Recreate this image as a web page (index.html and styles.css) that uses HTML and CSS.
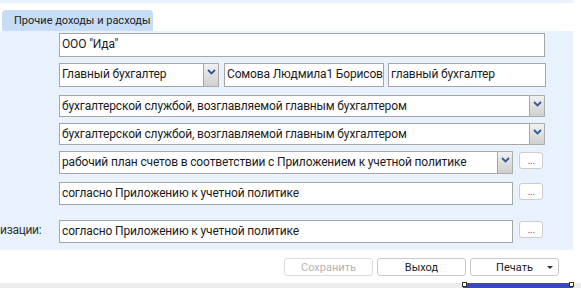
FILE: index.html
```html
<!DOCTYPE html>
<html lang="ru">
<head>
  <meta charset="UTF-8">
  <title>Прочие доходы и расходы</title>
  <link rel="stylesheet" href="styles.css">
</head>
<body>
  <div class="frame">
    <div class="tabbar">
      <div class="tab">Прочие доходы и расходы</div>
    </div>

    <div class="panel">
      <div class="row r1">
        <div class="label"></div>
        <div class="field w-full">ООО "Ида"</div>
      </div>

      <div class="row r2">
        <div class="label"></div>
        <div class="field w-post">Главный бухгалтер</div>
        <div class="drop"><svg viewBox="0 0 9 6" width="9" height="6"><path d="M1 1 L4.5 4.5 L8 1" fill="none" stroke="#2e5b97" stroke-width="1.8"/></svg></div>
        <div class="field w-name">Сомова Людмила1 Борисовна</div>
        <div class="field w-role">главный бухгалтер</div>
      </div>

      <div class="row r3">
        <div class="label"></div>
        <div class="field w-long">бухгалтерской службой, возглавляемой главным бухгалтером</div>
        <div class="drop"><svg viewBox="0 0 9 6" width="9" height="6"><path d="M1 1 L4.5 4.5 L8 1" fill="none" stroke="#2e5b97" stroke-width="1.8"/></svg></div>
      </div>

      <div class="row r4">
        <div class="label"></div>
        <div class="field w-long">бухгалтерской службой, возглавляемой главным бухгалтером</div>
        <div class="drop"><svg viewBox="0 0 9 6" width="9" height="6"><path d="M1 1 L4.5 4.5 L8 1" fill="none" stroke="#2e5b97" stroke-width="1.8"/></svg></div>
      </div>

      <div class="row r5">
        <div class="label"></div>
        <div class="field w-plan">рабочий план счетов в соответствии с Приложением к учетной политике</div>
        <div class="drop"><svg viewBox="0 0 9 6" width="9" height="6"><path d="M1 1 L4.5 4.5 L8 1" fill="none" stroke="#2e5b97" stroke-width="1.8"/></svg></div>
        <button class="more">...</button>
      </div>

      <div class="row r6">
        <div class="label"></div>
        <div class="field w-text">согласно Приложению к учетной политике</div>
        <button class="more">...</button>
      </div>

      <div class="row r7">
        <div class="label">изации:</div>
        <div class="field w-text">согласно Приложению к учетной политике</div>
        <button class="more">...</button>
      </div>
    </div>
  </div>

  <div class="footer">
    <button class="btn" disabled>Сохранить</button>
    <button class="btn">Выход</button>
    <button class="btn btn-menu">Печать <span class="caret"></span></button>
  </div>

  <div class="statusbar">
    <div class="selection"><span class="handle left"></span><span class="handle right"></span></div>
  </div>
</body>
</html>
```

FILE: styles.css
```css
html, body {
  margin: 0;
  padding: 0;
}
body {
  width: 581px;
  height: 288px;
  overflow: hidden;
  background: #fff;
  font-family: Roboto, "Liberation Sans", sans-serif;
  color: #1c1c1c;
}
.frame {
  width: 573px;
  padding-top: 3px;
  background: #e8f1fc;
}
.tabbar {
  height: 28px;
  background: #fff;
  display: flex;
  align-items: flex-end;
}
.tab {
  margin-left: 2px;
  width: 151px;
  height: 21px;
  line-height: 21px;
  box-sizing: border-box;
  padding-left: 12px;
  background: #c7ddf6;
  border-radius: 4px 4px 0 0;
  font-size: 11px;
  white-space: nowrap;
  color: #222;
}
.panel {
  height: 219px;
  padding-top: 2px;
  box-sizing: border-box;
}
.row {
  display: flex;
  align-items: flex-start;
  height: 23px;
  margin-top: 6px;
}
.r1 { margin-top: 0; height: 24px; }
.r2 { height: 24px; }
.r3 { margin-top: 8px; height: 22px; }
.r4 { height: 22px; }
.r6 { margin-top: 8px; }
.r7 { margin-top: 15px; }
.label {
  width: 59px;
  flex: none;
  font-size: 12px;
  letter-spacing: -0.3px;
  line-height: 21px;
  color: #333;
  white-space: nowrap;
  overflow: hidden;
}
.field {
  flex: none;
  height: 100%;
  box-sizing: border-box;
  border: 1px solid #a6a6a6;
  background: #fff;
  padding: 0 2px;
  font-size: 12px;
  letter-spacing: -0.15px;
  line-height: 21px;
  white-space: nowrap;
  overflow: hidden;
}
.r3 .field, .r4 .field { line-height: 20px; }
.w-full { width: 486px; }
.w-post { width: 145px; }
.w-name { width: 160px; margin-left: 5px; }
.w-role { width: 158px; margin-left: 4px; }
.w-long { width: 471px; }
.w-plan { width: 439px; }
.w-text { width: 454px; }
.drop {
  flex: none;
  width: 15px;
  height: 100%;
  box-sizing: border-box;
  border: 1px solid #acacac;
  border-left: none;
  background: linear-gradient(#f1f1f1, #cfcfcf);
  display: flex;
  justify-content: center;
  padding-top: 5px;
}
.more {
  flex: none;
  margin-left: 6px;
  margin-top: 1px;
  width: 24px;
  height: 17px;
  padding: 0;
  border: 1px solid #cdcdcd;
  border-radius: 3px;
  background: #fff;
  color: #6a3f78;
  font-family: "DejaVu Sans", sans-serif;
  font-size: 9px;
  line-height: 14px;
  letter-spacing: -0.5px;
}
.footer {
  height: 33px;
  display: flex;
  justify-content: flex-end;
  align-items: flex-start;
  gap: 4px;
  padding-right: 22px;
  padding-top: 8px;
  box-sizing: border-box;
}
.btn {
  width: 89px;
  height: 18px;
  padding: 0;
  border: 1px solid #c9c9c9;
  border-radius: 3px;
  background: #fff;
  font-family: Roboto, "Liberation Sans", sans-serif;
  font-size: 11px;
  color: #222;
  position: relative;
}
.btn:disabled {
  color: #b3b3b3;
  border-color: #dcdcdc;
}
.btn-menu .caret {
  position: absolute;
  right: 5px;
  top: 7px;
  border-left: 3px solid transparent;
  border-right: 3px solid transparent;
  border-top: 3px solid #333;
}
.statusbar {
  height: 5px;
  background: #ececec;
  position: relative;
}
.selection {
  position: absolute;
  left: 463px;
  width: 110px;
  top: 0;
  height: 5px;
  background: #3b46c5;
}
.handle {
  position: absolute;
  top: -1px;
  width: 3px;
  height: 3px;
  background: #fff;
  border: 1px solid #333;
}
.handle.left { left: -1px; }
.handle.right { right: -1px; }
```
